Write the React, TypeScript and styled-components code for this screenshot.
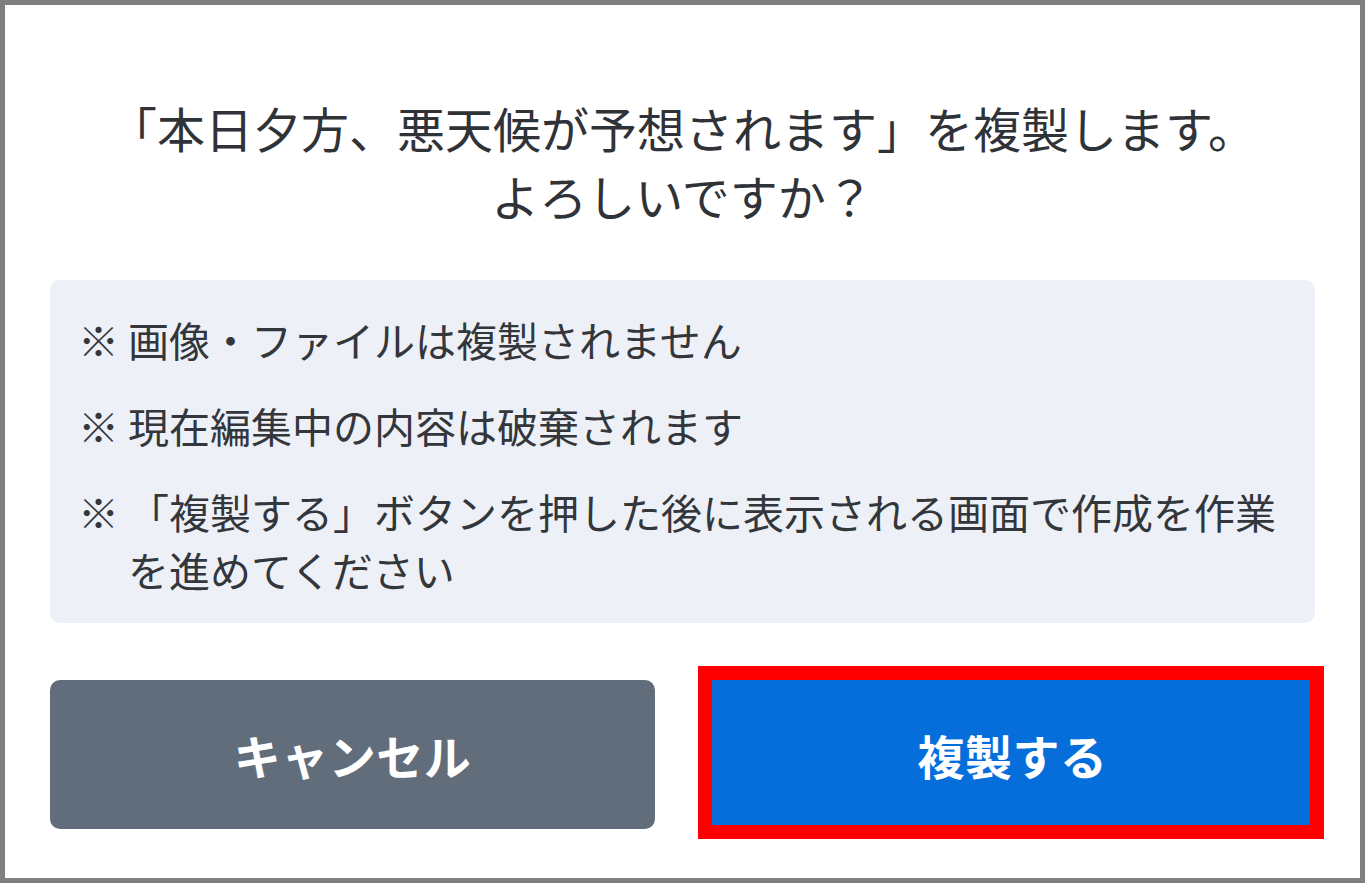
import * as React from 'react';
import styled, { createGlobalStyle } from 'styled-components';

const GlobalStyle = createGlobalStyle`
  html, body {
    margin: 0;
    padding: 0;
    background: #ffffff;
  }
  body {
    font-family: "Noto Sans CJK JP", "Noto Sans", sans-serif;
    color: #2f3237;
  }
  * {
    box-sizing: border-box;
  }
`;

const Dialog = styled.section`
  width: 1365px;
  height: 883px;
  border: 5px solid #7f7f7f;
  background: #ffffff;
  padding: 88px 45px 50px;
  display: flex;
  flex-direction: column;
`;

const Message = styled.p`
  margin: 0;
  text-align: center;
  font-size: 48px;
  line-height: 68px;
  color: #2f3237;
`;

const NoteBox = styled.ul`
  list-style: none;
  margin: 51px 0 0;
  padding: 30px 26px 25px 28px;
  background: #edf1f7;
  border-radius: 10px;
  display: flex;
  flex-direction: column;
  gap: 28px;
`;

const Note = styled.li`
  display: flex;
  font-size: 41px;
  line-height: 58px;
  color: #33363b;
`;

const Mark = styled.span`
  flex: 0 0 50px;
`;

const ButtonRow = styled.div`
  margin-top: 57px;
  display: grid;
  grid-template-columns: 1fr 1fr;
  gap: 55px;
`;

const Button = styled.button<{ $variant: 'cancel' | 'primary'; $highlight?: boolean }>`
  position: relative;
  height: 149px;
  border: none;
  border-radius: ${({ $variant }) => ($variant === 'cancel' ? '10px' : '0')};
  background: ${({ $variant }) => ($variant === 'cancel' ? '#626d7c' : '#056edb')};
  color: #ffffff;
  font-family: "Noto Sans CJK JP", "Noto Sans", sans-serif;
  font-weight: 700;
  font-size: 47px;
  letter-spacing: 0.5px;
  cursor: pointer;

  ${({ $highlight }) =>
    $highlight &&
    `
    &::after {
      content: '';
      position: absolute;
      left: -12px;
      right: -9px;
      top: -14px;
      bottom: -10px;
      border: 14px solid #ff0000;
      pointer-events: none;
    }
  `}
`;

const notes = [
  '画像・ファイルは複製されません',
  '現在編集中の内容は破棄されます',
  '「複製する」ボタンを押した後に表示される画面で作成を作業を進めてください',
];

const App: React.FunctionComponent = () => {
  return (
    <>
      <GlobalStyle />
      <Dialog>
        <Message>
          「本日夕方、悪天候が予想されます」を複製します。
          <br />
          よろしいですか？
        </Message>
        <NoteBox>
          {notes.map((note) => (
            <Note key={note}>
              <Mark>※</Mark>
              <span>{note}</span>
            </Note>
          ))}
        </NoteBox>
        <ButtonRow>
          <Button $variant="cancel">キャンセル</Button>
          <Button $variant="primary" $highlight>
            複製する
          </Button>
        </ButtonRow>
      </Dialog>
    </>
  );
};

export default App;
